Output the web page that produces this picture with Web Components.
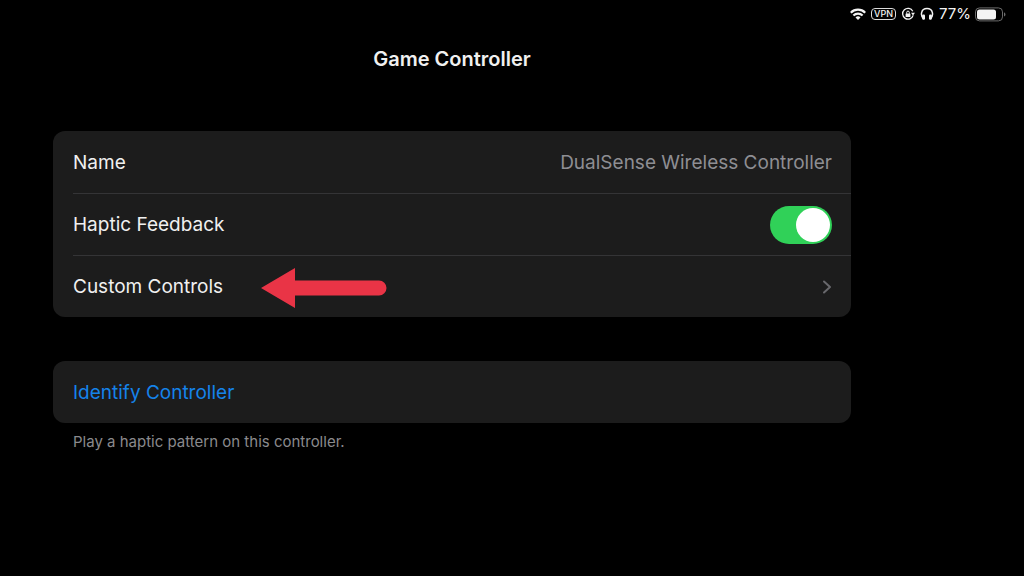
<!DOCTYPE html>
<html lang="en">
<head>
<meta charset="utf-8">
<meta name="viewport" content="width=device-width, initial-scale=1">
<title>Game Controller</title>
<style>
  body {
    margin: 0;
    background: #000;
    color: #f0f0f0;
    font-family: Inter, "Liberation Sans", sans-serif;
    font-size: 19px;
    line-height: 25px;
  }
</style>
</head>
<body>
<settings-page></settings-page>

<template id="status-bar">
<style>
:host {
  display: flex;
  justify-content: flex-end;
  align-items: center;
  gap: 5px;
  height: 28px;
  padding-right: 18px;
  color: #f4f4f4;
  font-size: 15px;
  line-height: 20px;
}
svg {
  display: block;
}
.vpn {
  border: 1px solid #dcdcdc;
  border-radius: 4px;
  padding: 0 2px;
  font-size: 9px;
  line-height: 10px;
  font-weight: 500;
}
.level {
  display: flex;
  align-items: center;
  gap: 4px;
}
</style>
<svg width="16" height="12" viewBox="0 0 16 12" fill="none" stroke="currentColor" stroke-width="2.2" aria-hidden="true">
  <path d="M.8 4.700a10.200 10.200 0 0 1 14.400 0M3.400 7.500a6.500 6.500 0 0 1 9.200 0"/>
  <path d="M8 12 5.500 9.500a3.600 3.600 0 0 1 5 0z" fill="currentColor" stroke="none"/>
</svg>
<span class="vpn">VPN</span>
<svg width="14" height="14" viewBox="0 0 14 14" fill="none" stroke="currentColor" aria-hidden="true">
  <path d="M11.8 4.2A5.4 5.4 0 1 0 12.2 8.4" stroke-width="1.3"/>
  <path d="M10 5.8h4l-2 2.8z" fill="currentColor" stroke="none"/>
  <rect x="4.6" y="6.4" width="4.8" height="3.6" rx=".6" fill="currentColor" stroke="none"/>
  <path d="M5.7 6.7V5.4a1.3 1.3 0 0 1 2.6 0v1.3" stroke-width="1"/>
</svg>
<svg width="14" height="14" viewBox="0 0 14 14" fill="none" stroke="currentColor" aria-hidden="true">
  <path d="M3.6 11.6C.2 8.8.6 1.600 7 1.600s6.800 7.200 3.400 10" stroke-width="1.5"/>
  <rect x="2.200" y="7.400" width="2.800" height="5.400" rx="1.200" fill="currentColor" stroke="none"/>
  <rect x="9" y="7.400" width="2.800" height="5.400" rx="1.200" fill="currentColor" stroke="none"/>
</svg>
<span class="level">
  <span>77%</span>
  <svg width="31" height="15" viewBox="0 0 31 15" aria-hidden="true">
    <rect x=".5" y=".9" width="27" height="13" rx="4" fill="none" stroke="#6c6c6c"/>
    <rect x="2" y="2.400" width="19" height="10" rx="2.500" fill="currentColor"/>
    <path d="M29 5.200c2 .8 2 3.600 0 4.400z" fill="#6c6c6c"/>
  </svg>
</span>
</template>

<template id="settings-group">
<style>
:host {
  display: block;
}
.card {
  background: #1c1c1c;
  border-radius: 12px;
}
::slotted([slot="note"]) {
  display: block;
  padding: 9px 20px 0;
  color: #8a8a8d;
  font-size: 15px;
  line-height: 20px;
}
</style>
<div class="card"><slot></slot></div>
<slot name="note"></slot>
</template>

<template id="settings-row">
<style>
:host {
  display: block;
  position: relative;
  padding-left: 20px;
}
.row {
  display: flex;
  align-items: center;
  justify-content: space-between;
  gap: 16px;
  box-sizing: border-box;
  min-height: 62px;
  padding-right: 19px;
}
:host([divided]) .row {
  border-top: 1px solid #343436;
}
::slotted([slot="value"]) {
  color: #8e8e93;
}
</style>
<div class="row">
  <slot></slot>
  <slot name="value"></slot>
</div>
</template>

<template id="toggle-switch">
<style>
:host {
  display: block;
}
label {
  display: flex;
  align-items: center;
  justify-content: space-between;
}
input {
  appearance: none;
  display: flex;
  box-sizing: border-box;
  width: 62px;
  height: 38px;
  margin: 0;
  padding: 2px;
  border-radius: 19px;
  background: #39393d;
}
input::before {
  content: "";
  width: 34px;
  height: 34px;
  border-radius: 50%;
  background: #fff;
}
input:checked {
  justify-content: flex-end;
  background: #30d158;
}
</style>
<label><slot></slot><input type="checkbox" role="switch" checked></label>
</template>

<template id="pointer-arrow">
<style>
:host {
  position: absolute;
  left: 208px;
  top: 13px;
  pointer-events: none;
}
svg {
  display: block;
}
</style>
<svg width="126" height="40" viewBox="0 0 126 40" fill="#e93446" aria-hidden="true">
  <path d="M0 20 34 0v12.500h84a7.500 7.500 0 0 1 0 15H34V40z"/>
</svg>
</template>

<template id="settings-page">
<style>
:host {
  display: block;
}
main {
  padding: 0 173px 0 53px;
}
h1 {
  margin: 0;
  padding: 19px 0 60px;
  text-align: center;
  font-size: 20px;
  line-height: 24px;
  font-weight: 600;
}
.groups {
  display: grid;
  gap: 44px;
}
toggle-switch {
  flex: 1;
}
a {
  flex: 1;
  display: flex;
  align-items: center;
  justify-content: space-between;
  color: inherit;
  text-decoration: none;
}
button {
  flex: 1;
  padding: 0;
  border: 0;
  background: none;
  color: #1583ea;
  font: inherit;
  text-align: left;
}
</style>
<status-bar></status-bar>
<main>
  <h1>Game Controller</h1>
  <div class="groups">
    <settings-group>
      <settings-row>
        <span>Name</span>
        <span slot="value">DualSense Wireless Controller</span>
      </settings-row>
      <settings-row divided>
        <toggle-switch>Haptic Feedback</toggle-switch>
      </settings-row>
      <settings-row divided>
        <a href="#custom-controls">Custom Controls
          <svg width="10" height="16" viewBox="0 0 10 16" fill="none" stroke="#68686c" stroke-width="2" stroke-linecap="round" stroke-linejoin="round" aria-hidden="true">
            <path d="M2 2.500 8 8l-6 5.500"/>
          </svg>
        </a>
        <pointer-arrow></pointer-arrow>
      </settings-row>
    </settings-group>
    <settings-group>
      <settings-row>
        <button type="button">Identify Controller</button>
      </settings-row>
      <span slot="note">Play a haptic pattern on this controller.</span>
    </settings-group>
  </div>
</main>
</template>

<script>
class TemplateElement extends HTMLElement {
  constructor() {
    super();
    const template = document.getElementById(this.localName);
    this.attachShadow({ mode: "open" }).append(template.content.cloneNode(true));
  }
}

customElements.define("status-bar", class StatusBar extends TemplateElement {});
customElements.define("toggle-switch", class ToggleSwitch extends TemplateElement {});
customElements.define("pointer-arrow", class PointerArrow extends TemplateElement {});
customElements.define("settings-row", class SettingsRow extends TemplateElement {});
customElements.define("settings-group", class SettingsGroup extends TemplateElement {});
customElements.define("settings-page", class SettingsPage extends TemplateElement {});
</script>
</body>
</html>
